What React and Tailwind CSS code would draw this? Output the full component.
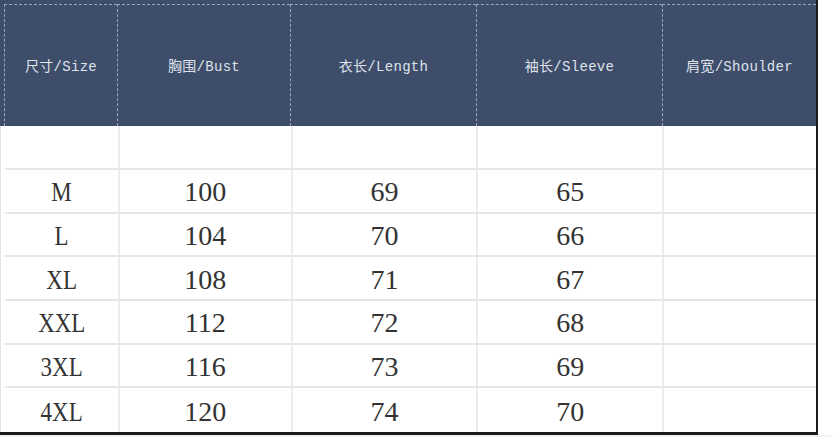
import React from "react";

const headers = ["尺寸/Size", "胸围/Bust", "衣长/Length", "袖长/Sleeve", "肩宽/Shoulder"];
const widths = ["w-[113px]", "w-[173px]", "w-[186px]", "w-[186px]", "w-[154px]"];
const rows = [
  ["M", "100", "69", "65", ""],
  ["L", "104", "70", "66", ""],
  ["XL", "108", "71", "67", ""],
  ["XXL", "112", "72", "68", ""],
  ["3XL", "116", "73", "69", ""],
  ["4XL", "120", "74", "70", ""],
];

export default function App() {
  return (
    <div className="w-[833px] h-[437px] bg-white overflow-hidden flex flex-col">
      <div className="w-[818px] h-[435px] border-r-2 border-b-[3px] border-[#1a1a1a] flex flex-col">
        {/* header */}
        <div className="h-[126px] bg-[#3e4d6a] pl-[4px] pt-[4px] flex">
          {headers.map((h, i) => (
            <div
              key={i}
              className={`${widths[i]} h-full border-t border-l border-dashed border-[#9aa6ba] flex items-center justify-center pt-[4px] text-[14px] text-[#dfe3ea] tracking-[0.3px]`}
              style={{ fontFamily: '"Liberation Mono", "Noto Sans CJK SC", monospace' }}
            >
              {h}
            </div>
          ))}
        </div>
        {/* body */}
        <div className="flex-1 flex flex-col pl-[4px] border-l border-[#e4e4e4]" style={{ fontFamily: '"Liberation Serif", serif' }}>
          <div className="h-[44px] flex border-b-2 border-[#e6e6e6]">
            {widths.map((w, i) => (
              <div key={i} className={`${w} h-full ${i > 0 ? "border-l-2 border-[#ececec]" : ""}`} />
            ))}
          </div>
          {rows.map((r, ri) => (
            <div key={ri} className={`h-[43.7px] flex ${ri < rows.length - 1 ? "border-b-2 border-[#e6e6e6]" : ""}`}>
              {r.map((c, ci) => (
                <div
                  key={ci}
                  className={`${widths[ci]} h-full flex items-center justify-center pt-[3px] text-[28px] text-[#333333] leading-none ${ci > 0 ? "border-l-2 border-[#ececec]" : ""}`}
                >
                  {ci === 0 ? <span className="inline-block scale-x-[0.82]">{c}</span> : c}
                </div>
              ))}
            </div>
          ))}
        </div>
      </div>
      <div className="flex-1 bg-[#f2f2f2]" />
    </div>
  );
}
